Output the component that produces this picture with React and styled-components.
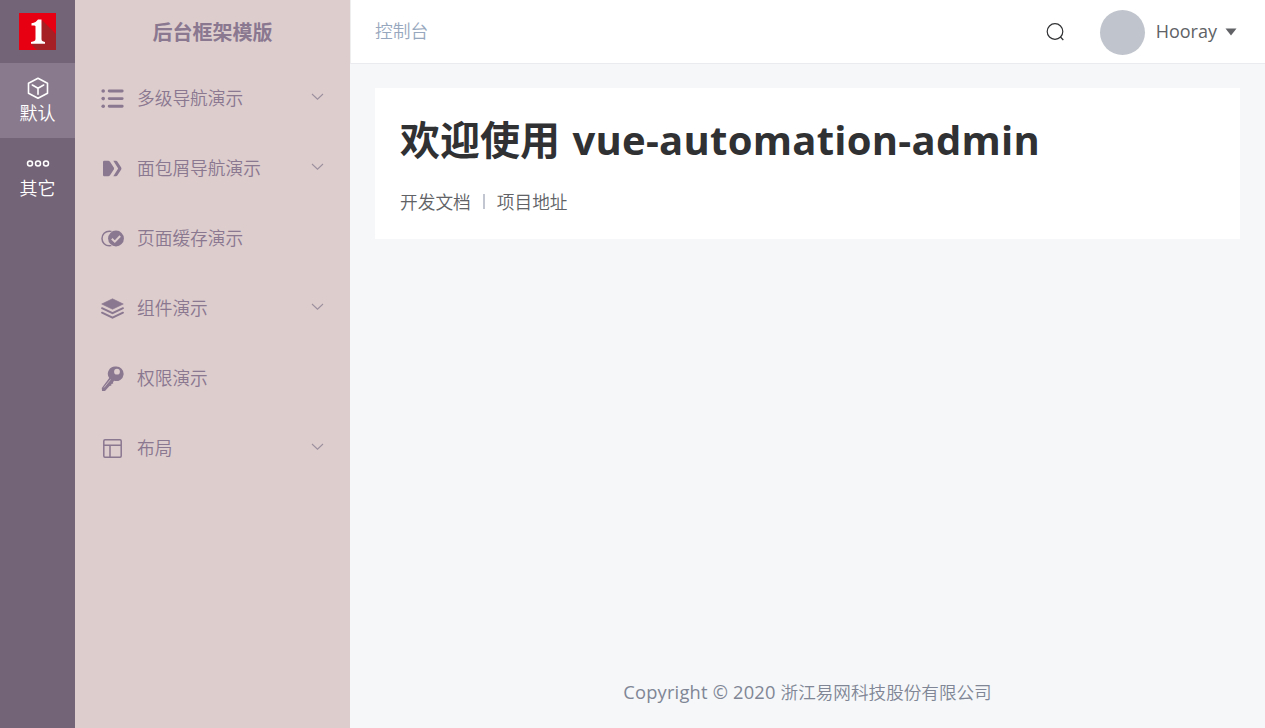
import React from "react";
import styled, { createGlobalStyle } from "styled-components";

const GlobalStyle = createGlobalStyle`
  * { box-sizing: border-box; }
  body {
    margin: 0;
    font-family: "Open Sans", "Noto Sans CJK SC", sans-serif;
    font-size: 17.5px;
    overflow: hidden;
  }
`;

const Page = styled.div`
  display: flex;
  width: 100%;
  height: 100vh;
  background: #f5f7f9;
`;

const MainSidebar = styled.nav`
  flex: 0 0 75px;
  background: #736477;
`;

const LogoBox = styled.div`
  height: 63px;
  display: flex;
  justify-content: center;
  padding-top: 13px;
`;

const MainItem = styled.a`
  height: 75px;
  padding-top: 13px;
  display: flex;
  flex-direction: column;
  align-items: center;
  color: #fff;
  background: ${(p) => (p.$active ? "#8a7a8d" : "transparent")};
  svg { display: block; }
`;

const MainLabel = styled.span`
  font-size: 18px;
  font-weight: 350;
  line-height: 25px;
  height: 25px;
  margin-top: 1px;
`;

const SubSidebar = styled.aside`
  flex: 0 0 275px;
  background: #ddcdcd;
  color: #8a7790;
`;

const SiteTitle = styled.h1`
  margin: 0;
  height: 63px;
  line-height: 65px;
  font-size: 20px;
  font-weight: 700;
  text-align: center;
`;

const MenuItem = styled.a`
  height: 70px;
  padding: 0 25px;
  display: flex;
  align-items: center;
  svg { display: block; flex: none; }
`;

const MenuLabel = styled.span`
  flex: 1;
  margin-left: 12px;
  font-size: 17.7px;
  font-weight: 350;
  line-height: 24px;
`;

const Arrow = styled.svg`
  margin: 0 0 4px;
  color: #9c909f;
`;

const Content = styled.div`
  flex: 1;
  min-width: 0;
  display: flex;
  flex-direction: column;
`;

const Topbar = styled.header`
  height: 64px;
  padding: 0 28px 0 24px;
  display: flex;
  align-items: center;
  background: #fff;
  border-bottom: 1px solid #e9ebee;
  border-left: 1px solid #eeeeee;
`;

const Crumb = styled.span`
  flex: 1;
  margin-bottom: 4px;
  font-size: 17.8px;
  font-weight: 350;
  color: #97a8be;
`;

const Avatar = styled.span`
  width: 45px;
  height: 45px;
  margin: 1px 11px 0 35px;
  border-radius: 50%;
  background: #c0c4cc;
`;

const UserName = styled.span`
  font-size: 18px;
  color: #606266;
  margin: 0 8px 2px 0;
`;

const Card = styled.section`
  margin: 24px 25px 0;
  height: 151px;
  padding: 25px;
  background: #fff;
`;

const Heading = styled.h2`
  margin: 0;
  height: 55px;
  line-height: 53px;
  font-size: 40px;
  font-weight: 700;
  color: #303133;
  white-space: nowrap;
`;

const HeadingName = styled.span`
  margin-left: 2px;
  letter-spacing: 0.27px;
`;

const Links = styled.div`
  display: flex;
  align-items: center;
  margin-top: 21px;
  height: 24px;
  color: #606266;
  font-size: 17.7px;
  font-weight: 350;
`;

const Divider = styled.i`
  width: 2px;
  height: 15px;
  margin: 0 12px 0 12px;
  background: #c2c6d0;
`;

const Footer = styled.footer`
  margin-top: auto;
  height: 72px;
  line-height: 72px;
  text-align: center;
  font-size: 17.6px;
  font-weight: 350;
  color: #808695;
`;

const FooterLatin = styled.span`
  font-weight: 400;
  font-size: 18.3px;
  letter-spacing: 0.2px;
`;

const Logo = () => (
  <svg width="37" height="37" viewBox="0 0 37 37">
    <rect width="37" height="37" fill="#e60012" />
    <path d="M23 7L37 21V37H18L12 31L20 26Z" fill="#a42025" />
    <path d="M12.5 10.2C16 9.700 17.500 8.500 19 6.500H22.500V26C22.500 28 23.500 28.600 26 28.900V30.700H12V28.900C15 28.600 16.500 28 16.500 26V13.500C16.500 12.300 15 12.300 12.500 12.500Z" fill="#fff" />
  </svg>
);

const Cube = () => (
  <svg width="24" height="24" viewBox="0 0 24 24" fill="none" stroke="currentColor" strokeWidth="1.6" strokeLinejoin="round" strokeLinecap="round">
    <path d="M12 2.200L21.500 7.200V17.200L12 22.200L2.500 17.200V7.200Z" />
    <path d="M6.300 9L12 12.200L17.700 9M12 12.200V18.200" />
  </svg>
);

const Dots = () => (
  <svg width="24" height="24" viewBox="0 0 24 24" fill="none" stroke="currentColor" strokeWidth="1.500">
    <circle cx="4" cy="12.500" r="2.500" />
    <circle cx="12" cy="12.500" r="2.500" />
    <circle cx="20" cy="12.500" r="2.500" />
  </svg>
);

const icons = {
  list: (
    <g>
      <path d="M9.200 5H22.200M9.200 12.600H22.200M9.200 20.200H22.200" stroke="currentColor" strokeWidth="2.900" strokeLinecap="round" />
      <circle cx="3.200" cy="5" r="1.800" />
      <circle cx="3.200" cy="12.600" r="1.800" />
      <circle cx="3.200" cy="20.200" r="1.800" />
    </g>
  ),
  crumb: (
    <g>
      <path d="M4.200 4.800H8.200Q9.300 4.800 10 5.800L13.800 11.500Q14.300 12.500 13.800 13.500L10 19.200Q9.300 20.200 8.200 20.200H4.200Q3 20.200 3 19V6Q3 4.800 4.200 4.800Z" />
      <path d="M13.300 4.800H16Q16.800 4.800 17.300 5.600L21.200 11.500Q21.700 12.500 21.200 13.500L17.300 19.400Q16.800 20.200 16 20.200H13.300L18.200 12.500Z" />
    </g>
  ),
  cache: (
    <g>
      <circle cx="9.300" cy="12.500" r="7.300" fill="none" stroke="currentColor" strokeWidth="1.500" />
      <circle cx="16" cy="12.500" r="8.600" fill="#ddcdcd" />
      <circle cx="16" cy="12.500" r="7.900" />
      <path d="M11.800 12.700L14.800 15.600L20.200 10" fill="none" stroke="#ddcdcd" strokeWidth="2" />
    </g>
  ),
  layers: (
    <g>
      <path d="M12.500 2.800L23.300 8L12.500 13.200L1.700 8Z" stroke="currentColor" strokeWidth=".6" strokeLinejoin="round" />
      <path d="M2 12.200L12.500 17.200L23 12.200M2 16.700L12.500 21.700L23 16.700" fill="none" stroke="currentColor" strokeWidth="1.900" strokeLinecap="round" />
    </g>
  ),
  key: (
    <g>
      <path fillRule="evenodd" d="M15.700 0.500A7.300 7.300 0 1 1 14 14.700L13 16.200L13.200 17.500L11.300 18L11.400 19.500L9.500 20L5 25H2L1.800 22L9.200 12A7.300 7.300 0 0 1 15.700 0.500ZM17 2.800A2.900 2.900 0 1 0 17 8.600A2.900 2.900 0 0 0 17 2.800Z" />
      <path d="M4 21.500L10.500 13.500" stroke="#ddcdcd" strokeWidth=".7" />
    </g>
  ),
  layout: (
    <path d="M5 3.800H20Q21.200 3.800 21.200 5V20Q21.200 21.200 20 21.200H5Q3.800 21.200 3.800 20V5Q3.800 3.800 5 3.800ZM3.800 9.200H21.200M10 9.200V21.200" fill="none" stroke="currentColor" strokeWidth="1.500" />
  ),
};

const menu = [
  { icon: "list", label: "多级导航演示", arrow: true },
  { icon: "crumb", label: "面包屑导航演示", arrow: true },
  { icon: "cache", label: "页面缓存演示" },
  { icon: "layers", label: "组件演示", arrow: true },
  { icon: "key", label: "权限演示" },
  { icon: "layout", label: "布局", arrow: true },
];

export default function App() {
  return (
    <Page>
      <GlobalStyle />
      <MainSidebar>
        <LogoBox><Logo /></LogoBox>
        <MainItem $active><Cube /><MainLabel>默认</MainLabel></MainItem>
        <MainItem><Dots /><MainLabel>其它</MainLabel></MainItem>
      </MainSidebar>
      <SubSidebar>
        <SiteTitle>后台框架模版</SiteTitle>
        {menu.map((m) => (
          <MenuItem key={m.label}>
            <svg width="25" height="25" viewBox="0 0 25 25" fill="currentColor">{icons[m.icon]}</svg>
            <MenuLabel>{m.label}</MenuLabel>
            {m.arrow && (
              <Arrow width="15" height="15" viewBox="0 0 15 15" fill="none" stroke="currentColor" strokeWidth="1.100">
                <path d="M2 5L7.500 10.200L13 5" />
              </Arrow>
            )}
          </MenuItem>
        ))}
      </SubSidebar>
      <Content>
        <Topbar>
          <Crumb>控制台</Crumb>
          <svg width="20" height="20" viewBox="0 0 20 20" fill="none" stroke="#303133" strokeWidth="1.200">
            <circle cx="10" cy="9.500" r="7.800" />
            <path d="M15.500 15L18.300 18" />
          </svg>
          <Avatar />
          <UserName>Hooray</UserName>
          <svg width="12" height="8" viewBox="0 0 12 8"><path d="M0.500 0.500H11.500L6 7.500Z" fill="#606266" /></svg>
        </Topbar>
        <Card>
          <Heading>欢迎使用 <HeadingName>vue-automation-admin</HeadingName></Heading>
          <Links>
            <span>开发文档</span>
            <Divider />
            <span>项目地址</span>
          </Links>
        </Card>
        <Footer><FooterLatin>Copyright © 2020 </FooterLatin>浙江易网科技股份有限公司</Footer>
      </Content>
    </Page>
  );
}
